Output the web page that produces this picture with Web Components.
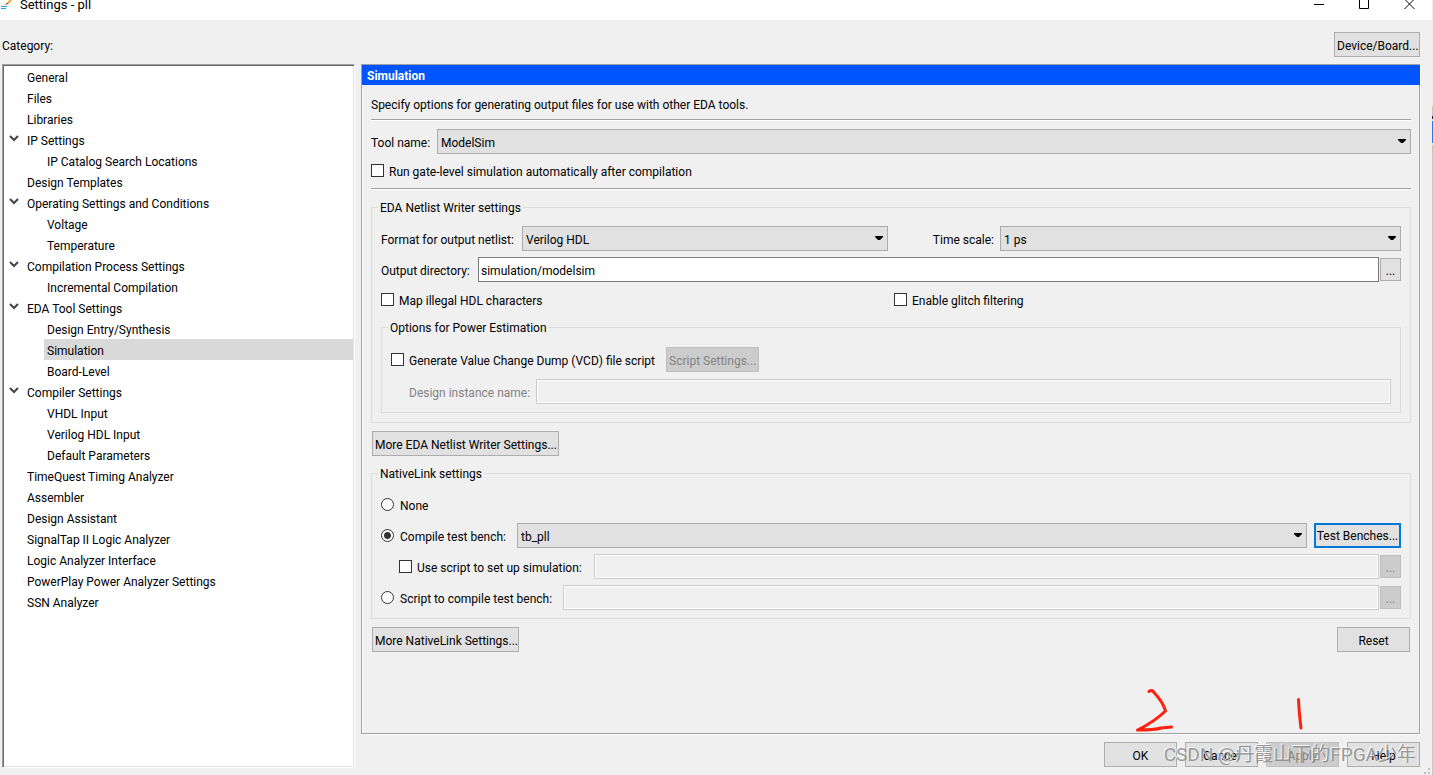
<!DOCTYPE html>
<html lang="en">
<head>
<meta charset="utf-8">
<title>Settings - pll</title>
<style>
html, body { height: 100%; }
body { margin: 0; background: #f0f0f0; color: #000; font: 12px/16px Roboto, "Open Sans", sans-serif; }
</style>
</head>
<body>
<settings-window></settings-window>
<script>
// Controls shared by every component that holds a form row.
const controls = `
  * { box-sizing: border-box; }
  label { flex: none; white-space: nowrap; padding-top: 2px; }
  .row { display: flex; align-items: center; height: 25px; }
  .check { display: flex; align-items: center; height: 18px; }
  .off { color: #838383; }
  select, input[type=text] {
    appearance: none; width: 100%; height: 25px; margin: 0; border-radius: 0;
    border: 1px solid #adadad; padding: 2px 24px 0 3px;
    background: #e1e1e1; color: #000; font: inherit; outline: 0;
  }
  input[type=text] { flex: 1; min-width: 0; background: #fff; border-color: #7a7a7a; padding: 2px 2px 0; }
  input[type=text]:disabled { background: #f0f0f0; border-color: #ccc; box-shadow: inset 0 0 0 1px #fff; }
  .combo { position: relative; flex: 1; min-width: 0; display: flex; }
  .combo svg { position: absolute; right: 5px; top: 10px; pointer-events: none; }
  input[type=checkbox], input[type=radio] {
    appearance: none; flex: none; width: 13px; height: 13px; margin: 0 5px 1px 0;
    border: 1px solid #333; background: #fff;
  }
  input[type=radio] { border-radius: 50%; margin-right: 6px; }
  input[type=radio]:checked { background: radial-gradient(circle, #333 3px, #fff 4px); }
`;
const arrow = `<svg width="8" height="5" viewBox="0 0 8 5" aria-hidden="true"><path d="M0 0h8v1L5 4H3L0 1z"/></svg>`;
const combo = (id, value) => `<span class="combo"><select id="${id}"><option>${value}</option></select>${arrow}</span>`;

function define(name, html) {
  const template = document.createElement('template');
  template.innerHTML = html;
  customElements.define(name, class extends HTMLElement {
    constructor() {
      super();
      this.attachShadow({ mode: 'open' }).append(template.content.cloneNode(true));
    }
  });
}

customElements.define('push-button', class extends HTMLElement {
  connectedCallback() {
    if (this.shadowRoot) return;
    this.attachShadow({ mode: 'open' }).innerHTML = `
      <style>
        :host { display: block; flex: none; }
        button { box-sizing: border-box; width: 100%; height: 25px; margin: 0; padding: 2px 2px 0;
          border: 1px solid #adadad; border-radius: 0; background: #e1e1e1; color: #000;
          font: inherit; white-space: nowrap; }
        button:disabled { background: #ccc; border-color: #bfbfbf; color: #838383; }
        :host([focused]) button { border: 2px solid #0078d7; padding: 1px 0 0; }
        :host([small]) button { height: 23px; padding: 2px 0 0; }
      </style>
      <button type="button" ${this.hasAttribute('disabled') ? 'disabled' : ''}><slot></slot></button>`;
  }
});

customElements.define('group-box', class extends HTMLElement {
  connectedCallback() {
    if (this.shadowRoot) return;
    this.attachShadow({ mode: 'open' }).innerHTML = `
      <style>
        :host { display: block; }
        fieldset { margin: 0; min-width: 0; border: 1px solid #dcdcdc; padding: 10px 9px 8px; }
        legend { margin-left: -3px; padding: 2px 2px 0; line-height: 16px; }
      </style>
      <fieldset><legend>${this.getAttribute('heading')}</legend><slot></slot></fieldset>`;
  }
});

define('title-bar', `
  <style>
    :host { display: flex; flex: none; height: 20px; background: #fff; overflow: hidden; }
    .icon { flex: none; width: 20px; height: 12px; }
    h1 { flex: 1; margin: 0; font: inherit; font-size: 13px; line-height: 10px; }
    button { width: 45px; height: 10px; padding: 0; border: 0; background: none; }
    button svg { display: block; margin: 0 auto; }
  </style>
  <svg class="icon" viewBox="0 0 20 12" aria-hidden="true">
    <path d="M1 6.500h6M1 8.500h5" stroke="#1ea7e8"/>
    <path d="M7 4l4-4" stroke="#f5a623" stroke-width="2"/>
    <path d="M5.500 4.500l2-1" stroke="#444"/>
  </svg>
  <h1>Settings - pll</h1>
  <button type="button" aria-label="Minimize"><svg width="11" height="10"><path d="M0 4.500h10" stroke="#000"/></svg></button>
  <button type="button" aria-label="Maximize"><svg width="11" height="10"><path d="M.5 0v8.500h9V0" fill="none" stroke="#000"/></svg></button>
  <button type="button" aria-label="Close"><svg width="11" height="10"><path d="M.5-1l10 10M10.500-1L.5 9" stroke="#000"/></svg></button>`);

const categories = [
  ['General'], ['Files'], ['Libraries'],
  ['IP Settings', ['IP Catalog Search Locations']],
  ['Design Templates'],
  ['Operating Settings and Conditions', ['Voltage', 'Temperature']],
  ['Compilation Process Settings', ['Incremental Compilation']],
  ['EDA Tool Settings', ['Design Entry/Synthesis', 'Simulation', 'Board-Level']],
  ['Compiler Settings', ['VHDL Input', 'Verilog HDL Input', 'Default Parameters']],
  ['TimeQuest Timing Analyzer'], ['Assembler'], ['Design Assistant'],
  ['SignalTap II Logic Analyzer'], ['Logic Analyzer Interface'],
  ['PowerPlay Power Analyzer Settings'], ['SSN Analyzer'],
];
const chevron = `<svg width="10" height="7" viewBox="0 0 10 7" aria-hidden="true"><path d="M1 1l4 4 4-4" fill="none" stroke="#444" stroke-width="2"/></svg>`;
define('category-tree', `
  <style>
    :host { display: block; box-sizing: border-box; background: #fff;
      border: 1px solid; border-color: #a0a0a0 #fff #fff #a0a0a0;
      box-shadow: inset 1px 1px #696969, inset -1px -1px #e3e3e3; padding: 1px; }
    ul { list-style: none; margin: 0; padding: 0; }
    .item { display: flex; align-items: center; height: 21px; box-sizing: border-box; padding: 2px 0 0 3px; }
    .mark { flex: none; width: 20px; display: flex; padding: 0 0 4px 2px; box-sizing: border-box; }
    ul ul { padding-left: 40px; }
    li[aria-selected] .item { background: #d9d9d9; }
  </style>
  <ul role="tree" aria-label="Category">${categories.map(([name, kids]) => `
    <li role="treeitem"${kids ? ' aria-expanded="true"' : ''}><div class="item"><span class="mark">${kids ? chevron : ''}</span>${name}</div>
    ${kids ? `<ul role="group">${kids.map(k => `<li role="treeitem"${k === 'Simulation' ? ' aria-selected="true"' : ''}><div class="item">${k}</div></li>`).join('')}</ul>` : ''}</li>`).join('')}
  </ul>`);

define('netlist-settings', `
  <style>${controls}
    :host { display: block; }
    .pair { display: grid; grid-template-columns: 1fr 1fr; column-gap: 6px; }
    .pair + .row { margin: 6px 0 9px; }
    .format { width: 141px; } .scale { width: 106px; padding-right: 6px; text-align: right; }
    .dir { width: 97px; }
    push-button[small] { width: 21px; margin-left: 1px; }
    .power { margin: 9px 0 1px; }
    .vcd { margin: 1px 0 7px; } .vcd .check { width: 275px; }
    .instance { padding-left: 18px; } .instance label { width: 127px; }
    .script { width: 93px; }
  </style>
  <group-box heading="EDA Netlist Writer settings">
    <div class="pair">
      <div class="row"><label class="format" for="format">Format for output netlist:</label>${combo('format', 'Verilog HDL')}</div>
      <div class="row"><label class="scale" for="scale">Time scale:</label>${combo('scale', '1 ps')}</div>
    </div>
    <div class="row"><label class="dir" for="dir">Output directory:</label><input type="text" id="dir" value="simulation/modelsim"><push-button small>...</push-button></div>
    <div class="pair">
      <div class="check"><input type="checkbox" id="map"><label for="map">Map illegal HDL characters</label></div>
      <div class="check"><input type="checkbox" id="glitch"><label for="glitch">Enable glitch filtering</label></div>
    </div>
    <group-box class="power" heading="Options for Power Estimation">
      <div class="row vcd">
        <div class="check"><input type="checkbox" id="vcd"><label for="vcd">Generate Value Change Dump (VCD) file script</label></div>
        <push-button class="script" disabled>Script Settings...</push-button>
      </div>
      <div class="row instance"><label class="off" for="instance">Design instance name:</label><input type="text" id="instance" disabled></div>
    </group-box>
  </group-box>`);

define('nativelink-settings', `
  <style>${controls}
    :host { display: block; }
    .rows { display: grid; row-gap: 6px; }
    .head { flex: none; display: flex; align-items: center; }
    .bench { width: 136px; } .setup { width: 213px; padding-left: 18px; } .compile { width: 182px; }
    push-button[small] { width: 21px; margin-left: 1px; }
    .benches { width: 87px; margin-left: 7px; }
  </style>
  <group-box heading="NativeLink settings">
    <div class="rows">
      <div class="row"><input type="radio" name="link" id="none"><label for="none">None</label></div>
      <div class="row"><span class="head bench"><input type="radio" name="link" id="bench" checked><label for="bench">Compile test bench:</label></span><span class="combo"><select aria-label="Test bench"><option>tb_pll</option></select>${arrow}</span><push-button class="benches" focused>Test Benches...</push-button></div>
      <div class="row"><span class="head setup"><input type="checkbox" id="setup"><label for="setup">Use script to set up simulation:</label></span><input type="text" aria-label="Setup script" disabled><push-button small disabled>...</push-button></div>
      <div class="row"><span class="head compile"><input type="radio" name="link" id="compile"><label for="compile">Script to compile test bench:</label></span><input type="text" aria-label="Compile script" disabled><push-button small disabled>...</push-button></div>
    </div>
  </group-box>`);

define('simulation-panel', `
  <style>${controls}
    :host { display: block; box-sizing: border-box; border: 1px solid #a0a0a0; box-shadow: 1px 1px #fff, inset 1px 0 #fff; }
    h2 { margin: 0 -1px 0 0; padding: 2px 0 0 5px; height: 20px; line-height: 18px; background: #0055ff; color: #fff; font-size: 12px; }
    .body { display: grid; row-gap: 8px; padding: 12px 8px 0 9px; }
    p { margin: 0; padding-top: 2px; line-height: 12px; }
    hr { width: 100%; height: 2px; margin: 0; border: 0; border-top: 1px solid #a0a0a0; background: #fff; }
    .tool { width: 66px; }
    .buttons { display: flex; justify-content: space-between; padding: 0 1px; }
    .netlist { width: 187px; } .native { width: 147px; } .reset { width: 73px; }
  </style>
  <h2>Simulation</h2>
  <div class="body">
    <p>Specify options for generating output files for use with other EDA tools.</p>
    <hr>
    <div class="row"><label class="tool" for="tool">Tool name:</label>${combo('tool', 'ModelSim')}</div>
    <div class="check"><input type="checkbox" id="gate"><label for="gate">Run gate-level simulation automatically after compilation</label></div>
    <hr>
    <netlist-settings></netlist-settings>
    <div class="buttons"><push-button class="netlist">More EDA Netlist Writer Settings...</push-button></div>
    <nativelink-settings></nativelink-settings>
    <div class="buttons"><push-button class="native">More NativeLink Settings...</push-button><push-button class="reset">Reset</push-button></div>
  </div>`);

define('dialog-footer', `
  <style>
    :host { display: flex; justify-content: flex-end; gap: 8px; padding: 8px 0 1px; }
    push-button { width: 73px; }
  </style>
  <push-button>OK</push-button><push-button>Cancel</push-button><push-button disabled>Apply</push-button><push-button>Help</push-button>`);

define('ink-notes', `
  <style>
    :host { display: block; position: absolute; right: 113px; bottom: 40px; pointer-events: none; }
    svg { display: block; }
  </style>
  <svg width="190" height="50" viewBox="1130 685 190 50" fill="none" stroke="#ff2010" stroke-width="3" stroke-linecap="round" stroke-linejoin="round" aria-hidden="true">
    <path d="M1149 691.500Q1152 689 1154 692.500Q1163 702 1165.500 711Q1154 722 1137.500 730Q1155 730 1161 728L1171.500 727"/>
    <path d="M1298.500 699.500Q1299 712 1301 728"/>
  </svg>`);

define('water-mark', `
  <style>
    :host { display: block; position: absolute; right: 17px; bottom: 6px; pointer-events: none;
      font: 19px/28px Roboto, "Noto Sans CJK SC", sans-serif; white-space: nowrap;
      color: rgba(130, 130, 130, .8); text-shadow: -1px -1px rgba(255, 255, 255, .8); }
  </style>
  <slot></slot>`);

define('settings-window', `
  <style>
    :host { position: relative; display: flex; flex-direction: column; box-sizing: border-box; padding-right: 1px;
      height: 100vh; min-height: 760px;
      background: linear-gradient(#ececec 106px, #c4c8b4 106px 116px, #202060 116px 119px, #f0f0f0 119px 121px, #4070d0 121px 143px, #f0f0f0 143px 145px, #c4c8b4 145px) right / 1px 100% no-repeat; }
    .top { flex: none; display: flex; align-items: center; justify-content: space-between; box-sizing: border-box; height: 44px; padding: 5px 12px 0 2px; }
    .top span { padding-top: 2px; }
    .device { width: 86px; }
    main { flex: 1; display: flex; gap: 6px; padding: 0 12px 7px 2px; }
    category-tree { flex: 0 0 353px; }
    .side { flex: 1; min-width: 0; display: flex; flex-direction: column; }
    simulation-panel { flex: 1; }
    .grip { position: absolute; right: 3px; bottom: 1px; }
  </style>
  <title-bar></title-bar>
  <div class="top"><span>Category:</span><push-button class="device">Device/Board...</push-button></div>
  <main>
    <category-tree></category-tree>
    <div class="side"><simulation-panel></simulation-panel><dialog-footer></dialog-footer></div>
  </main>
  <svg class="grip" width="6" height="6" fill="#bfbfbf" aria-hidden="true"><path d="M4 0h2v2H4zM0 4h2v2H0zM4 4h2v2H4z"/></svg>
  <ink-notes></ink-notes>
  <water-mark>CSDN @丹霞山下的FPGA少年</water-mark>`);
</script>
</body>
</html>
